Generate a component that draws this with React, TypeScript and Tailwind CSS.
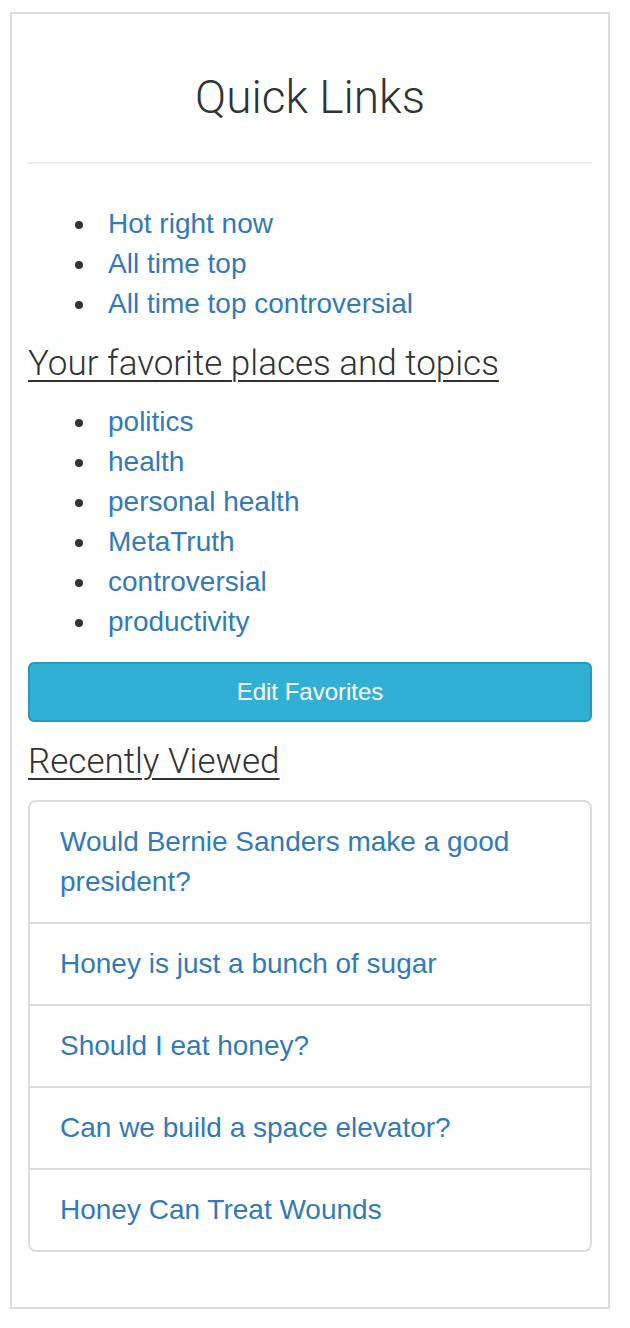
const quickLinks = ['Hot right now', 'All time top', 'All time top controversial']

const favorites = ['politics', 'health', 'personal health', 'MetaTruth', 'controversial', 'productivity']

const recentlyViewed = [
  'Would Bernie Sanders make a good president?',
  'Honey is just a bunch of sugar',
  'Should I eat honey?',
  'Can we build a space elevator?',
  'Honey Can Treat Wounds',
]

const base = { fontFamily: '"Liberation Sans", Arial, sans-serif' }
const light = { fontFamily: 'Roboto, "Liberation Sans", sans-serif' }

function LinkList({ items }: { items: string[] }) {
  return (
    <ul className="list-disc pl-[70px] text-[28px] leading-[40px] text-[#333]">
      {items.map((item) => (
        <li key={item} className="pl-[10px]">
          <a href="#" className="text-[#337ab7]">
            {item}
          </a>
        </li>
      ))}
    </ul>
  )
}

export default function App() {
  return (
    <div className="min-h-screen bg-white pt-[12px]" style={base}>
      <div className="ml-[10px] w-[600px] border-2 border-[#ddd] px-[16px] pt-[58px] pb-[55px]">
        <h1
          className="text-center text-[46px] leading-[50px] font-light text-[#333]"
          style={light}
        >
          Quick Links
        </h1>
        <hr className="mt-[40px] mb-[40px] border-t-2 border-[#eee]" />

        <LinkList items={quickLinks} />

        <h3
          className="mt-[21px] text-[35px] leading-[38px] font-light text-[#333] underline decoration-[2px] underline-offset-[5px]"
          style={light}
        >
          Your favorite places and topics
        </h3>
        <div className="mt-[19px]">
          <LinkList items={favorites} />
        </div>

        <button
          type="button"
          className="mt-[20px] flex h-[60px] w-full items-center justify-center rounded-[6px] border-2 border-[#269abc] bg-[#31b0d5] text-[24px] text-white"
        >
          Edit Favorites
        </button>

        <h3
          className="mt-[21px] text-[35px] leading-[38px] font-light text-[#333] underline decoration-[2px] underline-offset-[5px]"
          style={light}
        >
          Recently Viewed
        </h3>

        <div className="mt-[19px] overflow-hidden rounded-[8px] border-2 border-[#ddd]">
          {recentlyViewed.map((title, i) => (
            <div
              key={title}
              className={`px-[30px] py-[20px] text-[28px] leading-[40px] ${i > 0 ? 'border-t-2 border-[#ddd]' : ''}`}
            >
              <a href="#" className="text-[#337ab7]">
                {title}
              </a>
            </div>
          ))}
        </div>
      </div>
    </div>
  )
}
